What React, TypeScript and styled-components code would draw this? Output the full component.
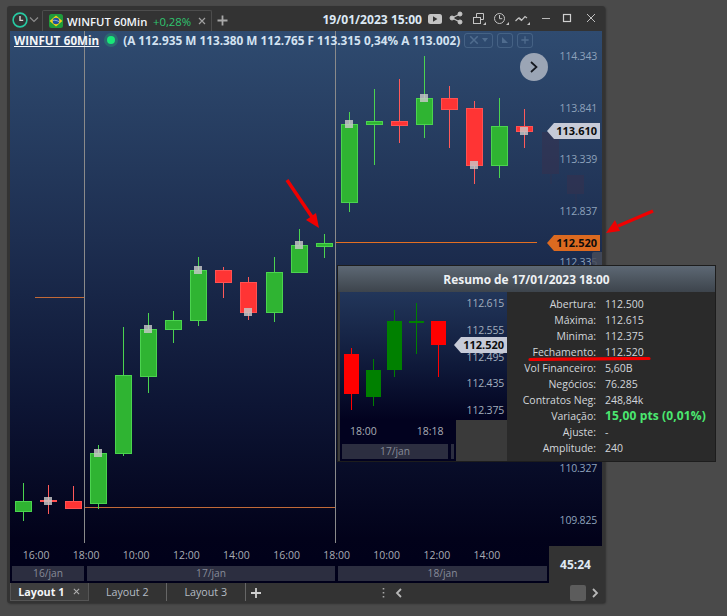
import { Fragment } from "react";
import styled, { createGlobalStyle } from "styled-components";

const GlobalStyle = createGlobalStyle`
  html, body {
    margin: 0;
    padding: 0;
    background: #4a4a4a;
    font-family: "Open Sans", "Liberation Sans", sans-serif;
  }
  #root {
    width: 727px;
    height: 616px;
    overflow: hidden;
    position: relative;
  }
`;

const Page = styled.div`
  width: 727px;
  height: 616px;
  padding: 6px 0 0 7px;
  box-sizing: border-box;
  background: #4a4a4a;
  position: relative;
  overflow: hidden;
`;

const Win = styled.div`
  width: 598px;
  height: 597px;
  display: flex;
  flex-direction: column;
  background: #333333;
  border-radius: 3px;
  box-shadow: 1px 1px 2px rgba(0, 0, 0, 0.35);
  position: relative;
`;

const TitleBar = styled.div`
  height: 25px;
  display: flex;
  align-items: flex-end;
  color: #e6e6e6;
  flex-shrink: 0;
`;

const ClockBtn = styled.div`
  width: 35px;
  height: 25px;
  display: flex;
  align-items: center;
  padding: 2px 0 0 5px;
  box-sizing: border-box;
  gap: 1px;
`;

const Tab = styled.div`
  width: 170px;
  height: 21px;
  box-sizing: border-box;
  border: 1px solid #4d4d4d;
  border-bottom: none;
  border-radius: 2px 2px 0 0;
  display: flex;
  align-items: center;
  padding-left: 6px;
  font-size: 11.3px;
  white-space: nowrap;
`;

const TabName = styled.span`
  font-weight: 600;
  color: #f2f6fa;
  margin-left: 4px;
  width: 86px;
`;

const TabChange = styled.span`
  color: #2fc56f;
  width: 45px;
`;

const AddTab = styled.div`
  width: 20px;
  height: 21px;
  display: flex;
  align-items: center;
  justify-content: center;
`;

const TitleDate = styled.div`
  margin-left: auto;
  height: 25px;
  display: flex;
  align-items: center;
  font-weight: 700;
  font-size: 12.1px;
  color: #dce8f4;
  padding-top: 2px;
  box-sizing: border-box;
  white-space: nowrap;
`;

const TitleTools = styled.div`
  height: 25px;
  width: 177px;
  margin-left: 6px;
  flex-shrink: 0;
`;

const ChartFrame = styled.div`
  position: relative;
  margin: 0 3px;
  height: 552px;
  width: 592px;
  flex-shrink: 0;
  background: linear-gradient(180deg, #2f4b70 0%, #1d2e50 38%, #0d1534 68%, #02021a 92%, #00001a 100%);
  display: flex;
  flex-direction: column;
`;

const Legend = styled.div`
  height: 18px;
  display: flex;
  align-items: center;
  padding-left: 4px;
  font-size: 11.8px;
  font-weight: 700;
  color: #d3e2f1;
  white-space: nowrap;
  position: relative;
  z-index: 2;
`;

const LegendName = styled.span`
  color: #f4f6f8;
  text-decoration: underline;
  word-spacing: 0.5px;
  font-size: 11.6px;
`;

const StatusDot = styled.span`
  width: 8px;
  height: 8px;
  margin: 0 8px 0 8px;
  border-radius: 50%;
  background: #19e678;
  box-shadow: 0 0 0 3px #2b6a70;
`;

const ToolBox = styled.span<{ $w: number }>`
  width: ${(p) => p.$w}px;
  height: 15px;
  box-sizing: border-box;
  margin-left: 4px;
  border: 1px solid rgba(130, 160, 190, 0.28);
  border-radius: 3px;
  display: flex;
  align-items: center;
  justify-content: center;
  gap: 3px;
  flex-shrink: 0;
`;

const Plot = styled.svg`
  position: absolute;
  left: 0;
  top: 0;
`;

const NextBtn = styled.div`
  position: absolute;
  left: 510px;
  top: 22px;
  width: 28px;
  height: 28px;
  border-radius: 50%;
  background: #9ba5b5;
  display: flex;
  align-items: center;
  justify-content: center;
`;

const PriceAxis = styled.div`
  position: absolute;
  right: 5px;
  top: 17px;
  display: flex;
  flex-direction: column;
  align-items: flex-end;
`;

const PriceLabel = styled.div`
  height: 51.55px;
  line-height: 16px;
  font-size: 10.5px;
  letter-spacing: -0.2px;
  color: #8ea2bb;
`;

const PriceTag = styled.div<{ $y: number; $bg: string }>`
  position: absolute;
  left: 537px;
  top: ${(p) => p.$y}px;
  width: 53px;
  height: 16px;
  box-sizing: border-box;
  padding-right: 3px;
  background: ${(p) => p.$bg};
  clip-path: polygon(0 50%, 7px 0, 100% 0, 100% 100%, 7px 100%);
  color: #0c0c0c;
  font-size: 11px;
  font-weight: 700;
  line-height: 16px;
  text-align: right;
`;

const ScrollStub = styled.div`
  position: absolute;
  left: 582px;
  top: 221px;
  width: 10px;
  height: 13px;
  background: rgba(70, 76, 90, 0.85);
  border-radius: 2px 0 0 2px;
`;

const TimeAxis = styled.div`
  margin-top: auto;
  height: 23px;
  display: flex;
  padding: 1px 0 0 1px;
  box-sizing: border-box;
  position: relative;
`;

const TimeLabel = styled.div`
  width: 50.1px;
  text-align: center;
  font-size: 10.5px;
  line-height: 22px;
  color: #a9adb5;
`;

const DateStrip = styled.div`
  height: 15px;
  margin-bottom: 2px;
  display: flex;
  padding-left: 2px;
  gap: 3px;
  position: relative;
`;

const DateCell = styled.div<{ $w: number }>`
  width: ${(p) => p.$w}px;
  background: #2c2e40;
  color: #878b98;
  font-size: 10.2px;
  line-height: 15px;
  text-align: center;
`;

const TimerCell = styled.div`
  position: absolute;
  right: -3px;
  bottom: 0;
  width: 56px;
  height: 37px;
  background: #333333;
  color: #dfe9f3;
  font-size: 12px;
  font-weight: 700;
  display: flex;
  align-items: center;
  justify-content: center;
  padding-right: 3px;
  box-sizing: border-box;
`;

const LayoutBar = styled.div`
  flex: 1;
  display: flex;
  align-items: center;
  padding: 0 3px;
  color: #b8c0c8;
  box-sizing: border-box;
`;

const LayoutTab = styled.div<{ $active?: boolean }>`
  width: 78.5px;
  height: 18px;
  margin-bottom: 2px;
  box-sizing: border-box;
  display: flex;
  align-items: center;
  justify-content: center;
  gap: 9px;
  border-right: 1px solid ${(p) => (p.$active ? "#555555" : "#666666")};
  border-left: ${(p) => (p.$active ? "1px solid #555" : "none")};
  border-bottom: ${(p) => (p.$active ? "1px solid #555" : "none")};
  background: ${(p) => (p.$active ? "#3e3e3e" : "transparent")};
  color: ${(p) => (p.$active ? "#f4f6f8" : "#b4bcc4")};
  font-size: ${(p) => (p.$active ? "10.8px" : "10.7px")};
  font-weight: ${(p) => (p.$active ? 700 : 400)};
`;

const BarRight = styled.div`
  margin-left: auto;
  display: flex;
  align-items: center;
  width: 220px;
  height: 20px;
`;

const ScrollThumb = styled.div`
  width: 16px;
  height: 16px;
  margin-left: 164px;
  border-radius: 2px;
  background: #5c5c5c;
`;

const Popup = styled.div`
  position: absolute;
  left: 330px;
  top: 259px;
  width: 379px;
  height: 197px;
  box-sizing: border-box;
  border: 1px solid #1d1d1d;
  background: #3a3a3a;
  display: flex;
  flex-direction: column;
  z-index: 5;
`;

const PopupTitle = styled.div`
  height: 26px;
  flex-shrink: 0;
  background: linear-gradient(180deg, #5d6874 0%, #3d444c 100%);
  color: #eef1f4;
  font-weight: 700;
  font-size: 11.9px;
  line-height: 26px;
  text-align: center;
`;

const PopupBody = styled.div`
  flex: 1;
  display: flex;
  padding-left: 2px;
  min-height: 0;
`;

const MiniColumn = styled.div`
  width: 167px;
  display: flex;
  flex-direction: column;
  flex-shrink: 0;
`;

const MiniPlot = styled.div`
  height: 128px;
  position: relative;
  background: linear-gradient(180deg, #22365a 0%, #0e1838 60%, #02021f 100%);
`;

const MiniPrices = styled.div`
  position: absolute;
  right: 3px;
  top: 3px;
  display: flex;
  flex-direction: column;
  align-items: flex-end;
`;

const MiniPrice = styled.div`
  height: 26.75px;
  line-height: 16px;
  font-size: 10.5px;
  letter-spacing: -0.2px;
  color: #a2aebd;
`;

const MiniTag = styled(PriceTag)`
  left: 114px;
  top: 45px;
`;

const MiniFoot = styled.div`
  width: 116px;
  flex: 1;
  background: #02021f;
  display: flex;
  flex-direction: column;
  padding: 0 2px 2px;
  box-sizing: border-box;
`;

const MiniTimes = styled.div`
  flex: 1;
  display: flex;
  padding-left: 8px;
  font-size: 10.5px;
  line-height: 22px;
  color: #a9adb5;
  gap: 40px;
`;

const MiniDates = styled.div`
  height: 15px;
  display: flex;
  gap: 3px;
`;

const Stats = styled.div`
  flex: 1;
  background: #2a2a2a;
  display: grid;
  grid-template-columns: 89px 1fr;
  grid-auto-rows: 16px;
  column-gap: 9px;
  padding-top: 4px;
  font-size: 10.5px;
  line-height: 16px;
  color: #d2d6da;
  align-content: start;
`;

const StatLabel = styled.div`
  text-align: right;
  white-space: nowrap;
`;

const StatValue = styled.div<{ $up?: boolean }>`
  white-space: nowrap;
  color: ${(p) => (p.$up ? "#4be870" : "#d2d6da")};
  font-size: ${(p) => (p.$up ? "12px" : "10.5px")};
  letter-spacing: ${(p) => (p.$up ? "0.12px" : "0")};
  font-weight: ${(p) => (p.$up ? 700 : 400)};
`;

const Annotations = styled.svg`
  position: absolute;
  left: 0;
  top: 0;
  pointer-events: none;
  z-index: 10;
`;

type Candle = { x: number; top: number; bot: number; hi: number; lo: number; up: boolean; mark?: number };

const candles: Candle[] = [
  { x: 15, top: 501, bot: 511, hi: 483, lo: 521, up: true },
  { x: 40, top: 500, bot: 501, hi: 485, lo: 514, up: false, mark: 501 },
  { x: 65, top: 501, bot: 508, hi: 486, lo: 508, up: false },
  { x: 90, top: 453, bot: 503, hi: 445, lo: 509, up: true, mark: 453 },
  { x: 115, top: 375, bot: 453, hi: 327, lo: 456, up: true },
  { x: 140, top: 329, bot: 376, hi: 313, lo: 393, up: true, mark: 329 },
  { x: 165, top: 320, bot: 329, hi: 311, lo: 343, up: true },
  { x: 190, top: 270, bot: 320, hi: 257, lo: 326, up: true, mark: 270 },
  { x: 215, top: 270, bot: 282, hi: 267, lo: 298, up: false },
  { x: 240, top: 282, bot: 312, hi: 277, lo: 320, up: false, mark: 312 },
  { x: 266, top: 272, bot: 312, hi: 257, lo: 322, up: true },
  { x: 291, top: 245, bot: 272, hi: 229, lo: 273, up: true, mark: 245 },
  { x: 316, top: 243, bot: 246, hi: 234, lo: 258, up: true },
  { x: 341, top: 124, bot: 202, hi: 112, lo: 212, up: true, mark: 124 },
  { x: 366, top: 121, bot: 124, hi: 89, lo: 165, up: true },
  { x: 391, top: 121, bot: 125, hi: 79, lo: 143, up: false },
  { x: 416, top: 98, bot: 124, hi: 56, lo: 138, up: true, mark: 98 },
  { x: 441, top: 98, bot: 109, hi: 86, lo: 148, up: false },
  { x: 466, top: 108, bot: 165, hi: 101, lo: 184, up: false, mark: 165 },
  { x: 491, top: 126, bot: 165, hi: 98, lo: 178, up: true },
  { x: 516, top: 126, bot: 131, hi: 109, lo: 148, up: false, mark: 131 },
];

const miniCandles = [
  { x: 344, top: 354, bot: 394, hi: 348, lo: 410, up: false },
  { x: 366, top: 370, bot: 397, hi: 359, lo: 406, up: true },
  { x: 387, top: 321, bot: 370, hi: 310, lo: 377, up: true },
  { x: 409, top: 321, bot: 323, hi: 303, lo: 354, up: true },
  { x: 431, top: 321, bot: 345, hi: 345, lo: 377, up: false },
];

// as linhas vazias ficam atras do resumo
const prices = ["114.343", "113.841", "113.339", "112.837", "112.335", "", "", "", "110.327", "109.825"];
const times = ["16:00", "18:00", "10:00", "12:00", "14:00", "16:00", "18:00", "10:00", "12:00", "14:00"];
const stats: [string, string, boolean?][] = [
  ["Abertura:", "112.500"],
  ["Máxima:", "112.615"],
  ["Minima:", "112.375"],
  ["Fechamento:", "112.520"],
  ["Vol Financeiro:", "5,60B"],
  ["Negócios:", "76.285"],
  ["Contratos Neg:", "248,84k"],
  ["Variação:", "15,00 pts (0,01%)", true],
  ["Ajuste:", "-"],
  ["Amplitude:", "240"],
];

function ClockIcon() {
  return (
    <svg width="16" height="16" viewBox="0 0 16 16">
      <circle cx="8" cy="8" r="6.9" fill="none" stroke="#27c9a2" strokeWidth="1.6" />
      <path d="M8 4v4.4h3.2" fill="none" stroke="#d8d8d8" strokeWidth="1.4" />
    </svg>
  );
}

function Chevron() {
  return (
    <svg width="10" height="8" viewBox="0 0 10 8">
      <path d="M1 1.5l4 4 4-4" fill="none" stroke="#8c8c8c" strokeWidth="1.2" />
    </svg>
  );
}

function Flag() {
  return (
    <svg width="14" height="14" viewBox="0 0 14 14">
      <rect width="14" height="14" rx="2.5" fill="#1f9b3c" />
      <path d="M7 1.6L13.4 7 7 12.4 .6 7z" fill="#f4d21a" />
      <circle cx="7" cy="7" r="3.3" fill="#1f4f9e" />
      <path d="M3.9 6.4c2-.4 4.2.1 6.1 1.3" fill="none" stroke="#e8eef5" strokeWidth=".6" />
    </svg>
  );
}

function Cross({ size = 8, color = "#a0a0a0" }: { size?: number; color?: string }) {
  return (
    <svg width={size} height={size} viewBox="0 0 8 8">
      <path d="M1 1l6 6M7 1L1 7" stroke={color} strokeWidth="1.2" fill="none" />
    </svg>
  );
}

function Plus({ size = 11, color = "#a8a8a8" }: { size?: number; color?: string }) {
  return (
    <svg width={size} height={size} viewBox="0 0 11 11">
      <path d="M5.5 0.5v10M0.5 5.5h10" stroke={color} strokeWidth="1.8" fill="none" />
    </svg>
  );
}

// icones da barra de titulo, desenhados na mesma folha
function TitleIcons() {
  const c = "#c4c4c4";
  return (
    <svg width="177" height="25" viewBox="427 6 177 25" style={{ display: "block" }}>
      <rect x="427" y="14" width="14" height="10" rx="2.5" fill={c} />
      <path d="M432 16.2l4.4 2.8-4.4 2.8z" fill="#333" />

      <g fill={c} stroke={c}>
        <circle cx="451" cy="18" r="2" />
        <circle cx="459" cy="14" r="2" />
        <circle cx="459" cy="22" r="2" />
        <path d="M451 18l8-4M451 18l8 4" strokeWidth="1.3" fill="none" />
      </g>

      <g fill="none" stroke={c} strokeWidth="1">
        <rect x="472.5" y="17.5" width="7" height="6" />
        <path d="M475.5 17.5v-4h7v6h-3" />
      </g>
      <path d="M485 22v3h-3z" fill={c} />

      <g fill="none" stroke={c} strokeWidth="1">
        <circle cx="498.5" cy="18.5" r="5" />
        <path d="M498.5 15v3.7h2.8" />
      </g>
      <path d="M508 22v3h-3z" fill={c} />

      <path d="M514.5 21l3-3 3 2.5 3.5-4 2 1.5" fill="none" stroke={c} strokeWidth="1.2" />
      <path d="M518 17.5l3 2.5" fill="none" stroke={c} strokeWidth="1" />
      <path d="M529 22v3h-3z" fill={c} />

      <path d="M541 18.5h8" stroke="#b8b8b8" strokeWidth="1" />
      <rect x="562.5" y="14.5" width="7" height="7" fill="none" stroke="#d0d0d0" strokeWidth="1.2" />
      <path d="M586 14l8 8M594 14l-8 8" stroke="#c0c0c0" strokeWidth="1" />
    </svg>
  );
}

function ChartDrawing() {
  const green = { fill: "#2fb432", stroke: "#4bd44f", wick: "#4bd44f" };
  const red = { fill: "#ff3434", stroke: "#ff5252", wick: "#ff5a5a" };
  return (
    <Plot width="592" height="552" viewBox="10 31 592 552">
      {/* sombras dos candles futuros */}
      <rect x="542" y="132" width="17" height="42" fill="#36324f" opacity=".55" />
      <rect x="567" y="175" width="17" height="19" fill="#36324f" opacity=".55" />
      <path d="M551 174v10M576 194v12" stroke="#36324f" opacity=".5" />

      <path d="M84.5 31v512M335.5 31v512" stroke="#8a8a8a" strokeWidth="1" />
      <path d="M35 297.5h49M85 507.5h250" stroke="#c26a38" strokeWidth="1" />
      <path d="M336 242.5h201" stroke="#e36f22" strokeWidth="1" />

      {candles.map((c) => {
        const k = c.up ? green : red;
        const cx = c.x + 8.5;
        const h = Math.max(c.bot - c.top, 1);
        return (
          <g key={c.x}>
            <path d={`M${cx} ${c.hi}V${c.lo}`} stroke={k.wick} strokeWidth="1" />
            <rect x={c.x + 0.5} y={c.top + 0.5} width="16" height={h} fill={k.fill} stroke={k.stroke} strokeWidth="1" />
            {c.mark !== undefined && (
              <rect x={c.x + 4} y={c.mark - 4} width="8" height="8" fill="#c8c8c8" opacity=".82" />
            )}
          </g>
        );
      })}
    </Plot>
  );
}

function MiniDrawing() {
  return (
    <Plot width="167" height="128" viewBox="340 292 167 128">
      {miniCandles.map((c) => {
        const color = c.up ? "#008000" : "#ff0000";
        return (
          <g key={c.x}>
            <path d={`M${c.x + 7.5} ${c.hi}V${c.lo}`} stroke={color} strokeWidth="1" />
            <rect x={c.x} y={c.top} width="15" height={c.bot - c.top} fill={color} />
          </g>
        );
      })}
    </Plot>
  );
}

export default function App() {
  return (
    <Page>
      <GlobalStyle />
      <Win>
        <TitleBar>
          <ClockBtn>
            <ClockIcon />
            <Chevron />
          </ClockBtn>
          <Tab>
            <Flag />
            <TabName>WINFUT 60Min</TabName>
            <TabChange>+0,28%</TabChange>
            <Cross />
          </Tab>
          <AddTab>
            <Plus />
          </AddTab>
          <TitleDate>19/01/2023 15:00</TitleDate>
          <TitleTools>
            <TitleIcons />
          </TitleTools>
        </TitleBar>

        <ChartFrame>
          <ChartDrawing />
          <Legend>
            <LegendName>WINFUT 60Min</LegendName>
            <StatusDot />
            (A 112.935 M 113.380 M 112.765 F 113.315 0,34% A 113.002)
            <ToolBox $w={29}>
              <Cross size={10} color="rgba(130,160,190,.4)" />
              <svg width="6" height="4" viewBox="0 0 6 4">
                <path d="M0 0h6L3 4z" fill="rgba(130,160,190,.4)" />
              </svg>
            </ToolBox>
            <ToolBox $w={16}>
              <svg width="8" height="8" viewBox="0 0 8 8">
                <path d="M1 1l6 6H1z" fill="rgba(130,160,190,.4)" />
              </svg>
            </ToolBox>
            <ToolBox $w={16}>
              <Plus size={8} color="rgba(130,160,190,.4)" />
            </ToolBox>
          </Legend>
          <NextBtn>
            <svg width="10" height="14" viewBox="0 0 10 14">
              <path d="M2 2l5.5 5L2 12" fill="none" stroke="#15181f" strokeWidth="1.7" />
            </svg>
          </NextBtn>
          <PriceAxis>
            {prices.map((p, i) => (
              <PriceLabel key={i}>{p}</PriceLabel>
            ))}
          </PriceAxis>
          <ScrollStub />
          <PriceTag $y={92} $bg="#c7cbd8">113.610</PriceTag>
          <PriceTag $y={204} $bg="#dc6a20">112.520</PriceTag>

          <TimeAxis>
            {times.map((t, i) => (
              <TimeLabel key={i}>{t}</TimeLabel>
            ))}
          </TimeAxis>
          <DateStrip>
            <DateCell $w={72}>16/jan</DateCell>
            <DateCell $w={248}>17/jan</DateCell>
            <DateCell $w={209}>18/jan</DateCell>
          </DateStrip>
          <TimerCell>45:24</TimerCell>
        </ChartFrame>

        <LayoutBar>
          <LayoutTab $active>
            Layout 1
            <Cross size={7} color="#b0b0b0" />
          </LayoutTab>
          <LayoutTab>Layout 2</LayoutTab>
          <LayoutTab>Layout 3</LayoutTab>
          <svg width="22" height="12" viewBox="0 0 22 12">
            <path d="M10 1v10M5 6h10" stroke="#d0d0d0" strokeWidth="1.8" />
          </svg>
          <BarRight>
            <svg width="24" height="14" viewBox="0 0 24 14">
              <path d="M1.5 2v1.6M1.5 6v1.6M1.5 10v1.6" stroke="#a8a8a8" strokeWidth="1.6" />
              <path d="M19 3l-4 4 4 4" fill="none" stroke="#b8b8b8" strokeWidth="1.8" />
            </svg>
            <ScrollThumb />
            <svg width="14" height="14" viewBox="0 0 14 14">
              <path d="M7 3l4 4-4 4" fill="none" stroke="#b8b8b8" strokeWidth="1.8" />
            </svg>
          </BarRight>
        </LayoutBar>

        <Popup>
          <PopupTitle>Resumo de 17/01/2023 18:00</PopupTitle>
          <PopupBody>
            <MiniColumn>
              <MiniPlot>
                <MiniDrawing />
                <MiniPrices>
                  {["112.615", "112.555", "112.495", "112.435", "112.375"].map((p) => (
                    <MiniPrice key={p}>{p}</MiniPrice>
                  ))}
                </MiniPrices>
                <MiniTag $y={45} $bg="#c7cbd8">112.520</MiniTag>
              </MiniPlot>
              <MiniFoot>
                <MiniTimes>
                  <span>18:00</span>
                  <span>18:18</span>
                </MiniTimes>
                <MiniDates>
                  <DateCell $w={106}>17/jan</DateCell>
                  <DateCell $w={3} />
                </MiniDates>
              </MiniFoot>
            </MiniColumn>
            <Stats>
              {stats.map(([label, value, up]) => (
                <Fragment key={label}>
                  <StatLabel>{label}</StatLabel>
                  <StatValue $up={up}>{value}</StatValue>
                </Fragment>
              ))}
            </Stats>
          </PopupBody>
        </Popup>
      </Win>

      <Annotations width="727" height="616" viewBox="0 0 727 616">
        <path d="M287 180L312 217" stroke="#f00000" strokeWidth="3.4" />
        <path d="M319 228l-13-8 10-7z" fill="#f00000" />
        <path d="M653 211L618 226" stroke="#f00000" strokeWidth="3.4" />
        <path d="M606 233l9-13 5 11z" fill="#f00000" />
        <path d="M530 359.5c40-.8 80-.8 119-1" fill="none" stroke="#f00000" strokeWidth="3.2" strokeLinecap="round" />
      </Annotations>
    </Page>
  );
}
